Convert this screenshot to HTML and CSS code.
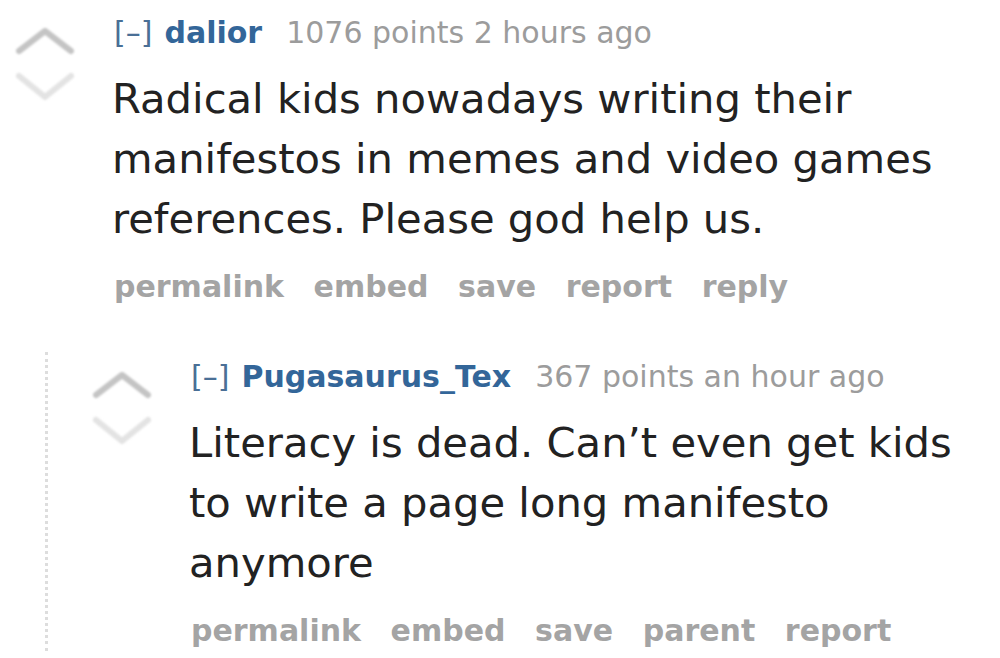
FILE: index.html
```html
<!DOCTYPE html>
<html lang="en">
<head>
<meta charset="utf-8">
<title>Comments</title>
<link rel="stylesheet" href="styles.css">
</head>
<body>
<div class="comment">
  <div class="midcol">
    <svg class="arrows" width="62" height="80" viewBox="0 0 62 80" aria-hidden="true">
      <polyline class="up" points="5,29 31,9 57,29"/>
      <polyline class="down" points="5,54 31,75 57,54"/>
    </svg>
  </div>
  <div class="entry">
    <p class="tagline"><span class="expand">[–]</span><span class="author">dalior</span><span class="score">1076 points 2 hours ago</span></p>
    <div class="md">Radical kids nowadays writing their manifestos in memes and video games references. Please god help us.</div>
    <ul class="buttons">
      <li>permalink</li>
      <li>embed</li>
      <li>save</li>
      <li>report</li>
      <li>reply</li>
    </ul>
  </div>
</div>
<div class="child">
  <div class="comment nested">
    <div class="midcol">
      <svg class="arrows" width="62" height="80" viewBox="0 0 62 80" aria-hidden="true">
        <polyline class="up" points="5,29 31,9 57,29"/>
        <polyline class="down" points="5,54 31,75 57,54"/>
      </svg>
    </div>
    <div class="entry">
      <p class="tagline"><span class="expand">[–]</span><span class="author">Pugasaurus_Tex</span><span class="score">367 points an hour ago</span></p>
      <div class="md">Literacy is dead. Can’t even get kids to write a page long manifesto anymore</div>
      <ul class="buttons">
        <li>permalink</li>
        <li>embed</li>
        <li>save</li>
        <li>parent</li>
        <li>report</li>
      </ul>
    </div>
  </div>
</div>
</body>
</html>
```
FILE: styles.css
```css
html, body {
  margin: 0;
  padding: 0;
  background: #ffffff;
}
body {
  font-family: "DejaVu Sans", Verdana, sans-serif;
  color: #222222;
  overflow: hidden;
}
.comment {
  display: flex;
  padding-left: 14px;
}
.midcol {
  width: 98px;
  flex: none;
}
.arrows {
  display: block;
  margin-top: 22px;
  filter: blur(0.8px);
}
.arrows polyline {
  fill: none;
  stroke-width: 6;
  stroke-linecap: round;
  stroke-linejoin: round;
}
.arrows .up { stroke: #c4c4c4; }
.arrows .down { stroke: #e3e3e3; }
.entry {
  flex: 1;
  min-width: 0;
  padding-top: 13px;
}
.tagline {
  margin: 0;
  padding-left: 2px;
  font-size: 30px;
  line-height: 40px;
  color: #9c9c9c;
  white-space: nowrap;
}
.expand {
  color: #4a6f96;
  margin-right: 12px;
}
.author {
  color: #336699;
  font-weight: bold;
}
.score {
  margin-left: 24px;
}
.md {
  margin-top: 16px;
  font-size: 41.7px;
  line-height: 60px;
  color: #222222;
}
.buttons {
  list-style: none;
  margin: 18px 0 0;
  padding: 0 0 0 2px;
  display: flex;
  gap: 29.6px;
  font-size: 30px;
  line-height: 40px;
  font-weight: bold;
  color: #a4a4a4;
}
.child {
  margin-left: 45px;
  margin-top: 45px;
  border-left: 3px dotted #dddddd;
}
.nested {
  padding-left: 43px;
}
.nested .arrows {
  margin-top: 14px;
}
.nested .entry {
  padding-top: 5px;
}
```
